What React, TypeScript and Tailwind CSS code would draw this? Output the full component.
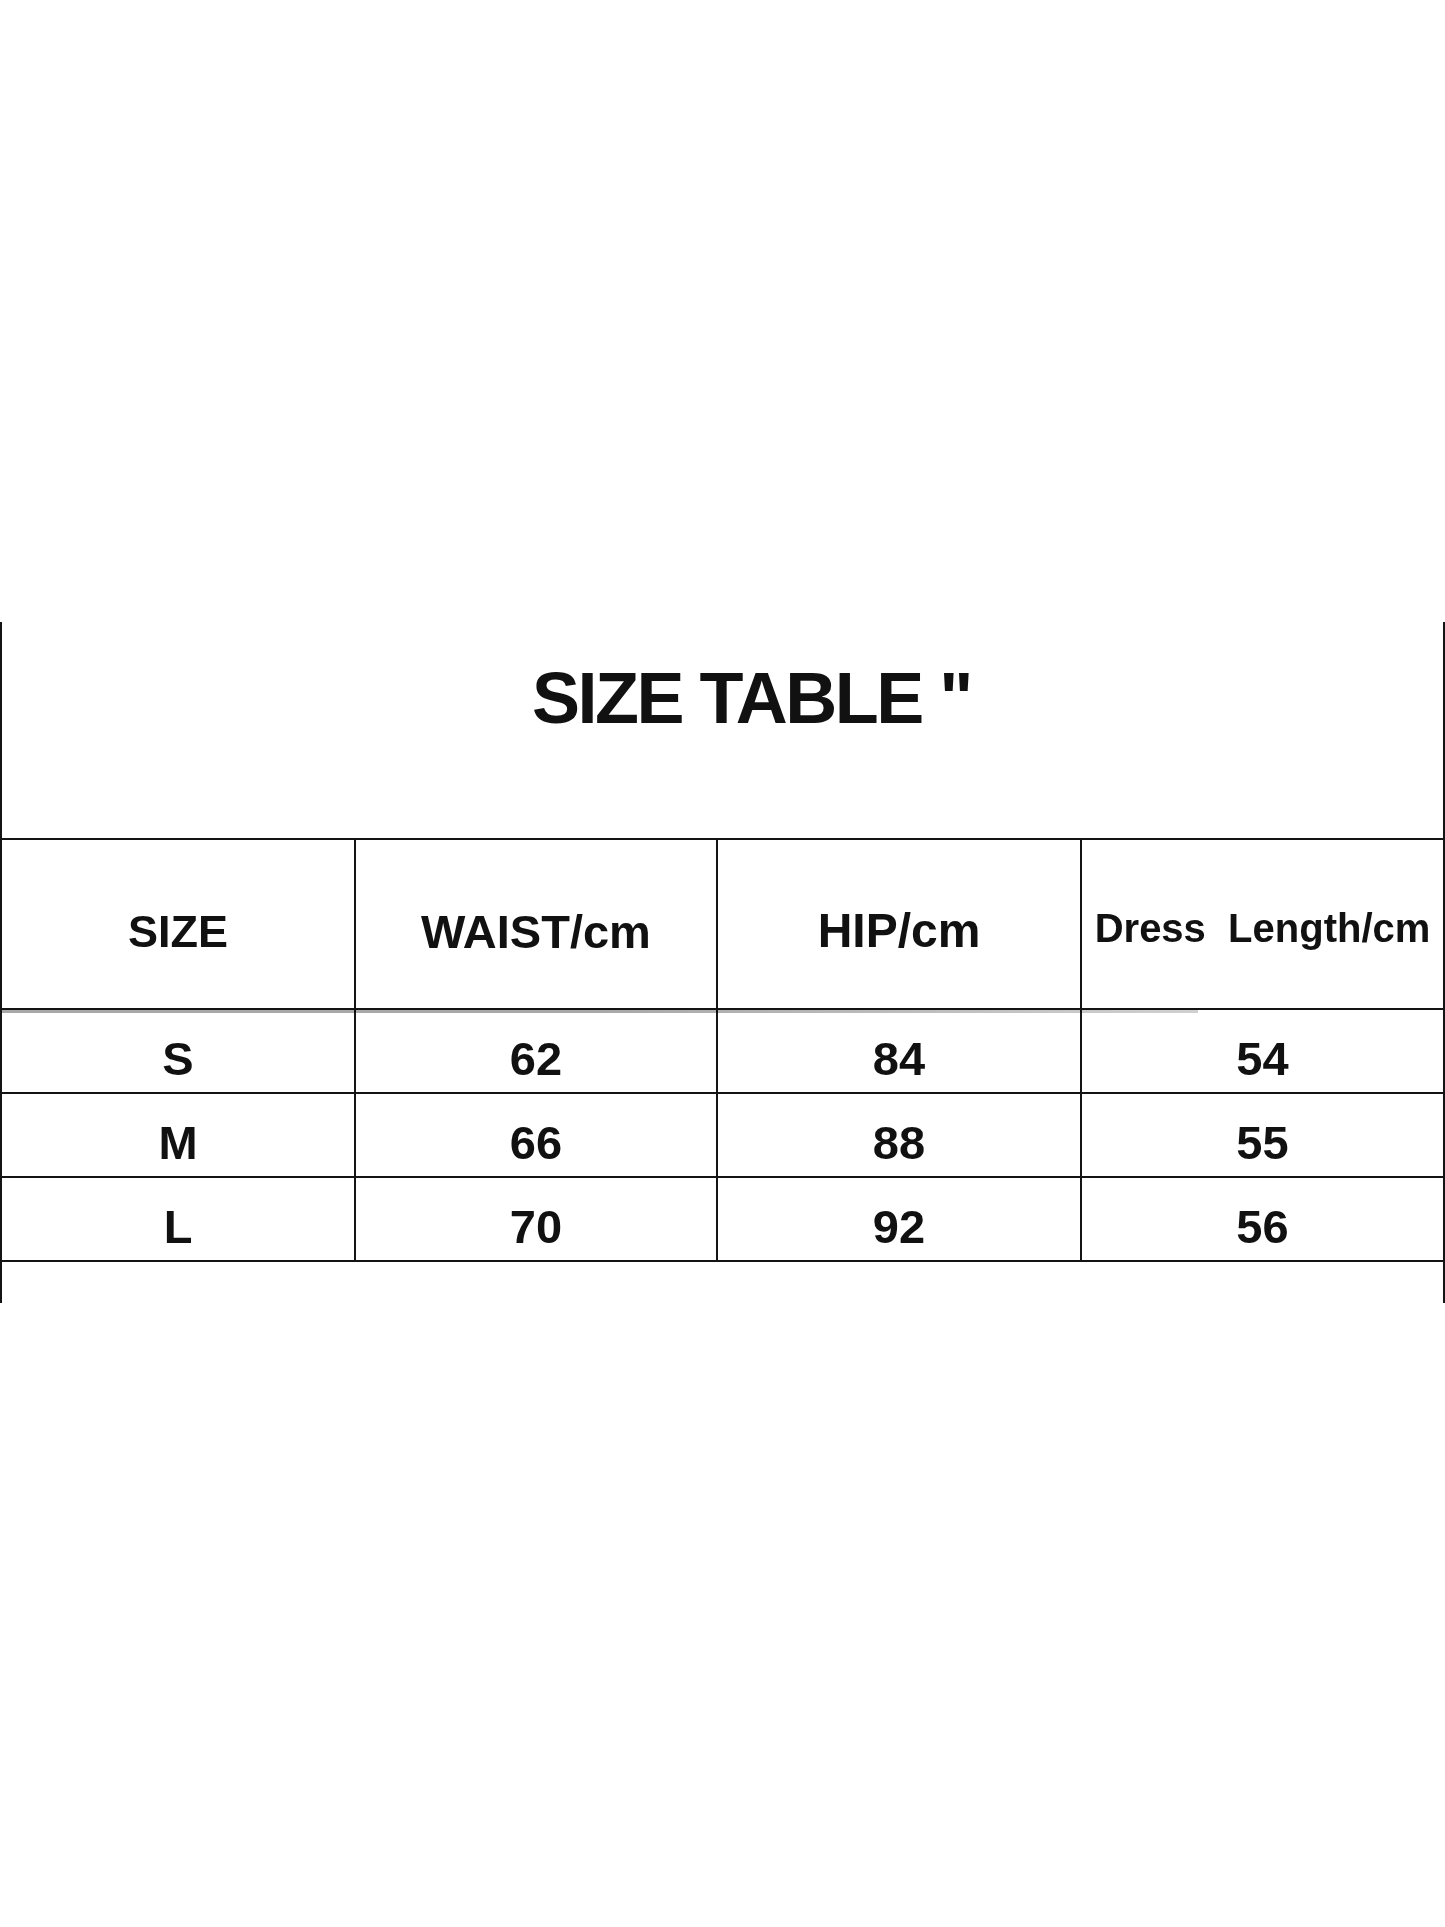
import React from "react";

const rows = [
  ["S", "62", "84", "54"],
  ["M", "66", "88", "55"],
  ["L", "70", "92", "56"],
];

const cellBase =
  "flex items-center justify-center border-l-2 border-[#141414] first:border-l-0";

export default function App() {
  return (
    <div
      className="w-[1445px] min-h-[1927px] bg-white pt-[622px] text-[#111]"
      style={{ fontFamily: '"Liberation Sans", Arial, sans-serif' }}
    >
      <div className="flex h-[681px] flex-col border-x-2 border-[#141414]">
        <div className="h-[216px] pl-[530px] pt-[40px]">
          <span className="text-[72px] font-bold leading-none tracking-[-2.5px]">
            SIZE TABLE "
          </span>
        </div>

        <div className="grid h-[170px] grid-cols-[352px_362px_364px_1fr] border-t-2 border-[#141414]">
          <div className={cellBase + " pt-[14px] text-[45px] font-bold leading-none"}>SIZE</div>
          <div className={cellBase + " pt-[14px] text-[47px] font-bold leading-none"}>WAIST/cm</div>
          <div className={cellBase + " pt-[14px] text-[48px] font-bold leading-none"}>HIP/cm</div>
          <div className={cellBase + " whitespace-pre pt-[8px] text-[40px] font-bold leading-none"}>
            {"Dress  Length/cm"}
          </div>
        </div>

        {rows.map((r, i) => (
          <div
            key={r[0]}
            className="relative grid h-[84px] grid-cols-[352px_362px_364px_1fr] border-t-2 border-[#141414]"
          >
            {r.map((c, j) => (
              <div
                key={j}
                className={cellBase + " pt-[14px] text-[47px] font-bold leading-none"}
              >
                {c}
              </div>
            ))}
            {i === 0 && (
              <div className="pointer-events-none absolute left-0 top-0 h-[3px] w-[1196px] bg-gradient-to-r from-[#a8a8a8] via-[#a8a8a8] to-[#d0d0d0] mix-blend-multiply" />
            )}
          </div>
        ))}

        <div className="flex-1 border-t-2 border-[#141414]" />
      </div>
    </div>
  );
}
